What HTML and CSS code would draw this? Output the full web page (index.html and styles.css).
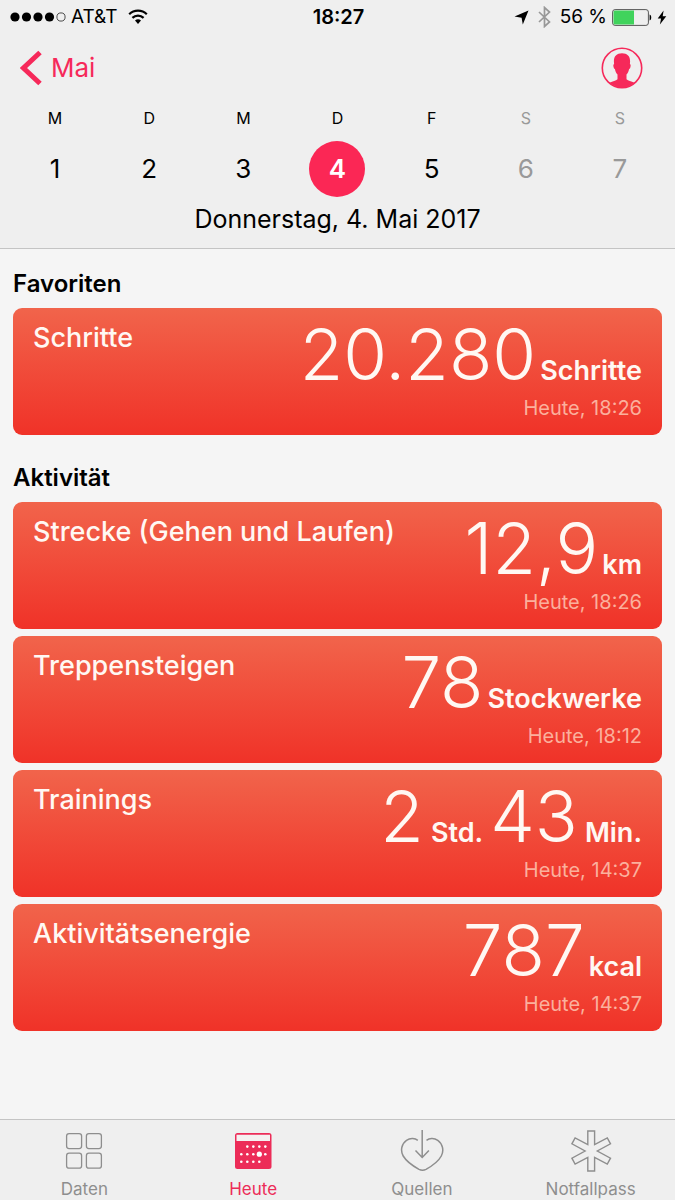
FILE: index.html
```html
<!DOCTYPE html>
<html lang="de">
<head>
<meta charset="utf-8">
<meta name="viewport" content="width=device-width, initial-scale=1">
<title>Health – Heute</title>
<link rel="stylesheet" href="styles.css">
</head>
<body>
<div class="app">
  <header class="top">
    <div class="status">
      <div class="status-left">
        <svg class="signal" width="56" height="12" viewBox="0 0 56 12" aria-hidden="true">
          <circle cx="5" cy="6" r="4.6"/><circle cx="16.500" cy="6" r="4.600"/><circle cx="28" cy="6" r="4.600"/><circle cx="39.500" cy="6" r="4.600"/>
          <circle cx="51" cy="6" r="4.100" fill="none" stroke="#222" stroke-width="0.800"/>
        </svg>
        <span>AT&amp;T</span>
        <svg class="wifi" width="20" height="16" viewBox="0 0 20 16" aria-hidden="true">
          <g fill="none" stroke="#000" stroke-width="2.200"><path d="M1.200 5.300a12.500 12.500 0 0 1 17.600 0"/><path d="M4.400 8.900a8 8 0 0 1 11.200 0"/></g>
          <path d="M7 11.600a4.300 4.300 0 0 1 6 0L10 14.900z"/>
        </svg>
      </div>
      <time class="clock">18:27</time>
      <div class="status-right">
        <svg width="15" height="15" viewBox="0 0 15 15" aria-hidden="true"><path d="M14.500.500 8.800 14.500 7.600 7.700.500 6.600z"/></svg>
        <svg class="bluetooth" width="13" height="22" viewBox="0 0 13 22" aria-hidden="true"><path d="M1 6l10.500 10L6.500 20.500v-19l5 4.500L1 16" fill="none" stroke="#989898" stroke-width="1.700"/></svg>
        <span>56 %</span>
        <svg class="battery" width="40" height="17" viewBox="0 0 40 17" aria-hidden="true">
          <rect x=".600" y=".600" width="35.800" height="15.800" rx="2.500" fill="none" stroke="#555"/>
          <path d="M3 1.500h19v14H3a1.500 1.500 0 0 1-1.500-1.500V3A1.500 1.500 0 0 1 3 1.500z" fill="#40d35c"/>
          <path d="M37.600 5.500c2.200.6 2.200 5.400 0 6z"/>
        </svg>
        <svg width="10" height="15" viewBox="0 0 10 15" aria-hidden="true"><path d="M6.600.500.700 8.600h3.400L2.900 14.500 9.300 6.200H5.700z"/></svg>
      </div>
    </div>
    <nav class="navbar">
      <a class="back" href="#mai">
        <svg width="22" height="36" viewBox="0 0 22 36" aria-hidden="true"><path d="M20 2.500 3.500 18 20 33.500" fill="none" stroke="currentColor" stroke-width="5"/></svg>
        <span>Mai</span>
      </a>
      <button class="profile" type="button" aria-label="Profil">
        <svg width="42" height="42" viewBox="0 0 42 42" aria-hidden="true">
          <circle cx="21" cy="21" r="19.700" fill="none" stroke="currentColor" stroke-width="1.600"/>
          <path d="M21 6.300c5.200 0 8.300 3 8.100 8.300l-.200 2.300c1 .2.900 1.800.4 3.600-.300 1-.8 1.400-1.200 1.600-.5 2.600-1.300 4.300-2.600 5.500v4.700c1.700 1.400 4.600 2 8 3.500A19.500 19.500 0 0 1 21 40.500a19.500 19.500 0 0 1-12.500-4.700c3.400-1.500 6.300-2.100 8-3.500v-4.700c-1.300-1.200-2.100-2.900-2.600-5.500-.4-.2-.9-.6-1.200-1.600-.5-1.800-.6-3.400.4-3.600l-.200-2.300C12.700 9.300 15.800 6.300 21 6.300z" fill="currentColor"/>
        </svg>
      </button>
    </nav>
    <div class="week">
      <button type="button" class="day"><span class="weekday">M</span><span class="num">1</span></button>
      <button type="button" class="day"><span class="weekday">D</span><span class="num">2</span></button>
      <button type="button" class="day"><span class="weekday">M</span><span class="num">3</span></button>
      <button type="button" class="day selected" aria-pressed="true"><span class="weekday">D</span><span class="num">4</span></button>
      <button type="button" class="day"><span class="weekday">F</span><span class="num">5</span></button>
      <button type="button" class="day weekend"><span class="weekday">S</span><span class="num">6</span></button>
      <button type="button" class="day weekend"><span class="weekday">S</span><span class="num">7</span></button>
    </div>
    <h1 class="date">Donnerstag, 4. Mai 2017</h1>
  </header>

  <main class="content">
    <section class="group">
      <h2 class="group-title">Favoriten</h2>
      <article class="card">
        <h3 class="card-title">Schritte</h3>
        <div class="reading">
          <p class="value"><span class="figure">20.280</span><span class="unit">Schritte</span></p>
          <p class="stamp">Heute, 18:26</p>
        </div>
      </article>
    </section>
    <section class="group">
      <h2 class="group-title">Aktivität</h2>
      <article class="card">
        <h3 class="card-title">Strecke (Gehen und Laufen)</h3>
        <div class="reading">
          <p class="value"><span class="figure">12,9</span><span class="unit">km</span></p>
          <p class="stamp">Heute, 18:26</p>
        </div>
      </article>
      <article class="card">
        <h3 class="card-title">Treppensteigen</h3>
        <div class="reading">
          <p class="value"><span class="figure">78</span><span class="unit">Stockwerke</span></p>
          <p class="stamp">Heute, 18:12</p>
        </div>
      </article>
      <article class="card">
        <h3 class="card-title">Trainings</h3>
        <div class="reading">
          <p class="value duration"><span class="figure">2</span><span class="unit">Std.</span><span class="figure">43</span><span class="unit">Min.</span></p>
          <p class="stamp">Heute, 14:37</p>
        </div>
      </article>
      <article class="card">
        <h3 class="card-title">Aktivitätsenergie</h3>
        <div class="reading">
          <p class="value"><span class="figure">787</span><span class="unit">kcal</span></p>
          <p class="stamp">Heute, 14:37</p>
        </div>
      </article>
    </section>
  </main>

  <nav class="tabs">
    <a class="tab" href="#daten">
      <svg width="44" height="44" viewBox="0 0 44 44" fill="none" stroke="currentColor" stroke-width="1.300" aria-hidden="true">
        <rect x="4.600" y="4.600" width="15" height="15" rx="2.500"/><rect x="24.400" y="4.600" width="15" height="15" rx="2.500"/><rect x="4.600" y="24.200" width="15" height="15" rx="2.500"/><rect x="24.400" y="24.200" width="15" height="15" rx="2.500"/>
      </svg>
      <span>Daten</span>
    </a>
    <a class="tab active" href="#heute" aria-current="page">
      <svg width="44" height="44" viewBox="0 0 44 44" aria-hidden="true">
        <rect x="4" y="4" width="36.500" height="36" rx="2.500" fill="currentColor"/>
        <path d="M5.500 5.800h33.500v6.200H5.500z" fill="#f4f1f1"/>
        <g fill="#fff"><circle cx="16.300" cy="17.600" r="1.300"/><circle cx="22.300" cy="17.600" r="1.300"/><circle cx="28.300" cy="17.600" r="1.300"/><circle cx="34.300" cy="17.600" r="1.300"/><circle cx="10.300" cy="25.200" r="1.300"/><circle cx="16.300" cy="25.200" r="1.300"/><circle cx="22.300" cy="25.200" r="1.300"/><circle cx="28.300" cy="25.200" r="2.600"/><circle cx="34.300" cy="25.200" r="1.300"/><circle cx="10.300" cy="32.800" r="1.300"/><circle cx="16.300" cy="32.800" r="1.300"/><circle cx="22.300" cy="32.800" r="1.300"/><circle cx="28.300" cy="32.800" r="1.300"/></g>
      </svg>
      <span>Heute</span>
    </a>
    <a class="tab" href="#quellen">
      <svg width="44" height="44" viewBox="0 0 44 44" fill="none" stroke="currentColor" stroke-width="1.500" aria-hidden="true">
        <path d="M17.800 11.300C15.200 9.400 10.500 8.600 6.500 11.300 1.800 14.500 0 21.500 3.200 27c3.300 5.500 10.300 10.300 15.800 13.300q3.500 1.800 7 0C31.500 37.300 38.300 32.500 41.300 27 44.300 21.500 42.500 14.500 37.800 11.300c-4-2.700-8.700-1.900-11.300 0"/>
        <path d="M22.200 1v27.500M15.500 21.500l6.700 7 6.700-7"/>
      </svg>
      <span>Quellen</span>
    </a>
    <a class="tab" href="#notfallpass">
      <svg width="44" height="44" viewBox="0 0 44 44" fill="none" stroke="currentColor" stroke-width="1.400" aria-hidden="true">
        <path d="M18.800 2h6.800v13.700L38.300 9l3.200 5.800L28.300 22l13.200 7.200-3.200 5.800-12.700-6.700V42h-6.800V28.300L6.100 35l-3.200-5.800L16.100 22 2.900 14.800 6.100 9l12.700 6.700z"/>
      </svg>
      <span>Notfallpass</span>
    </a>
  </nav>
</div>
</body>
</html>
```
FILE: styles.css
```css
* {
  box-sizing: border-box;
}

body,
h1,
h2,
h3,
p {
  margin: 0;
}

body {
  font-family: Inter, "Liberation Sans", sans-serif;
  color: #000;
  background: #f5f5f5;
}

button {
  font: inherit;
  color: inherit;
  background: none;
  border: 0;
  padding: 0;
}

a {
  text-decoration: none;
}

svg {
  display: block;
  flex: none;
}

.app {
  display: flex;
  flex-direction: column;
  min-height: 100vh;
}

.top {
  background: #efefef;
  border-bottom: 1px solid #c4c4c4;
  padding-bottom: 13px;
}

/* Status bar */
.status {
  display: grid;
  grid-template-columns: 1fr auto 1fr;
  align-items: center;
  height: 34px;
  padding: 0 8px 0 10px;
  font-size: 19px;
  line-height: 24px;
}

.status-left,
.status-right {
  display: flex;
  align-items: center;
  gap: 5px;
}

.wifi {
  margin-left: 5px;
}

.clock {
  font-size: 20px;
  font-weight: 600;
}

.status-right {
  justify-content: flex-end;
}

.bluetooth {
  margin: 0 4px;
}

/* Navigation bar */
.navbar {
  display: flex;
  align-items: center;
  justify-content: space-between;
  height: 68px;
  padding: 0 32px 0 20px;
  color: #f6295a;
}

.back {
  display: flex;
  align-items: center;
  gap: 9px;
  color: inherit;
  font-size: 26px;
  line-height: 32px;
}

/* Week strip */
.week {
  display: grid;
  grid-template-columns: repeat(7, 1fr);
  padding: 6px 8px 0;
}

.day {
  display: flex;
  flex-direction: column;
  align-items: center;
  gap: 13px;
}

.weekday {
  font-size: 16px;
  line-height: 20px;
}

.num {
  display: grid;
  place-items: center;
  width: 56px;
  height: 56px;
  border-radius: 50%;
  font-size: 26px;
  line-height: 32px;
}

.selected .num {
  background: #fb2755;
  color: #fff;
  font-weight: 600;
}

.weekend {
  color: #999;
}

.date {
  margin-top: 6px;
  font-size: 25px;
  font-weight: 400;
  line-height: 32px;
  text-align: center;
}

/* Cards */
.content {
  flex: 1;
  padding: 18px 13px;
}

.group {
  display: flex;
  flex-direction: column;
  gap: 7px;
}

.group + .group {
  margin-top: 26px;
}

.group-title {
  font-size: 24px;
  font-weight: 600;
  line-height: 34px;
}

.card {
  display: flex;
  justify-content: space-between;
  min-height: 127px;
  padding: 14px 20px;
  border-radius: 9px;
  background: linear-gradient(#f1644b, #f03228);
  color: #fff8f3;
}

.card-title {
  font-size: 27px;
  font-weight: 500;
  line-height: 32px;
}

.reading {
  text-align: right;
  white-space: nowrap;
}

.value {
  display: flex;
  align-items: baseline;
  justify-content: flex-end;
  gap: 4px;
}

.duration {
  gap: 7px;
}

.figure {
  font-size: 71px;
  font-weight: 300;
  line-height: 64px;
}

.unit {
  font-size: 27px;
  font-weight: 600;
  line-height: 32px;
}

.stamp {
  margin-top: 9px;
  font-size: 20px;
  line-height: 24px;
  color: #fbb09d;
}

/* Tab bar */
.tabs {
  display: grid;
  grid-template-columns: repeat(4, 1fr);
  background: #efefef;
  border-top: 1px solid #c4c4c4;
}

.tab {
  display: flex;
  flex-direction: column;
  align-items: center;
  gap: 5px;
  padding: 9px 0 0;
  color: #8e8e8e;
  font-size: 17px;
  line-height: 22px;
}

.tab.active {
  color: #ec2c58;
}
```
